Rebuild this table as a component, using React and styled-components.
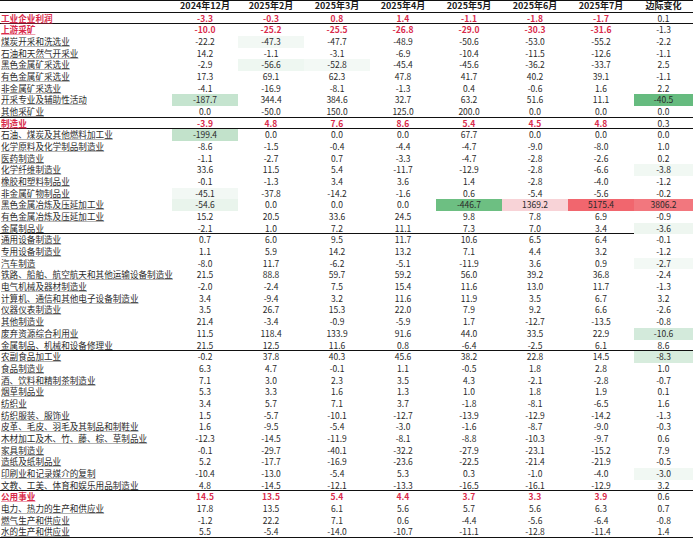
import React from "react";
import styled, { createGlobalStyle } from "styled-components";

const GlobalStyle = createGlobalStyle`
  html, body {
    margin: 0;
    padding: 0;
    background: #ffffff;
  }
  body {
    font-family: "Noto Sans CJK SC", "Noto Sans", sans-serif;
    color: #222222;
  }
`;

const months = [
  "2024年12月",
  "2025年2月",
  "2025年3月",
  "2025年4月",
  "2025年5月",
  "2025年6月",
  "2025年7月",
  "边际变化"
];

// name, values, red (section total), line (thick rule below)
const rows = [
  ["工业企业利润", [-3.3, -0.3, 0.8, 1.4, -1.1, -1.8, -1.7, 0.1], true, true],
  ["上游采矿", [-10.0, -25.2, -25.5, -26.8, -29.0, -30.3, -31.6, -1.3], true],
  ["煤炭开采和洗选业", [-22.2, -47.3, -47.7, -48.9, -50.6, -53.0, -55.2, -2.2]],
  ["石油和天然气开采业", [14.2, -1.1, -3.1, -6.9, -10.4, -11.5, -12.6, -1.1]],
  ["黑色金属矿采选业", [-2.9, -56.6, -52.8, -45.4, -45.6, -36.2, -33.7, 2.5]],
  ["有色金属矿采选业", [17.3, 69.1, 62.3, 47.8, 41.7, 40.2, 39.1, -1.1]],
  ["非金属矿采选业", [-4.1, -16.9, -8.1, -1.3, 0.4, -0.6, 1.6, 2.2]],
  ["开采专业及辅助性活动", [-187.7, 344.4, 384.6, 32.7, 63.2, 51.6, 11.1, -40.5]],
  ["其他采矿业", [0.0, -50.0, 150.0, 125.0, 200.0, 0.0, 0.0, 0.0], false, true],
  ["制造业", [-3.9, 4.8, 7.6, 8.6, 5.4, 4.5, 4.8, 0.3], true, true],
  ["石油、煤炭及其他燃料加工业", [-199.4, 0.0, 0.0, 0.0, 67.7, 0.0, 0.0, 0.0]],
  ["化学原料及化学制品制造业", [-8.6, -1.5, -0.4, -4.4, -4.7, -9.0, -8.0, 1.0]],
  ["医药制造业", [-1.1, -2.7, 0.7, -3.3, -4.7, -2.8, -2.6, 0.2]],
  ["化学纤维制造业", [33.6, 11.5, 5.4, -11.7, -12.9, -2.8, -6.6, -3.8]],
  ["橡胶和塑料制品业", [-0.1, -1.3, 3.4, 3.6, 1.4, -2.8, -4.0, -1.2]],
  ["非金属矿物制品业", [-45.1, -37.8, -14.2, -1.6, 0.6, -5.4, -5.6, -0.2]],
  ["黑色金属冶炼及压延加工业", [-54.6, 0.0, 0.0, 0.0, -446.7, 1369.2, 5175.4, 3806.2]],
  ["有色金属冶炼及压延加工业", [15.2, 20.5, 33.6, 24.5, 9.8, 7.8, 6.9, -0.9]],
  ["金属制品业", [-2.1, 1.0, 7.2, 11.1, 7.3, 7.0, 3.4, -3.6], false, true],
  ["通用设备制造业", [0.7, 6.0, 9.5, 11.7, 10.6, 6.5, 6.4, -0.1]],
  ["专用设备制造业", [1.1, 5.9, 14.2, 13.2, 7.1, 4.4, 3.2, -1.2]],
  ["汽车制造", [-8.0, 11.7, -6.2, -5.1, -11.9, 3.6, 0.9, -2.7]],
  ["铁路、船舶、航空航天和其他运输设备制造业", [21.5, 88.8, 59.7, 59.2, 56.0, 39.2, 36.8, -2.4]],
  ["电气机械及器材制造业", [-2.0, -2.4, 7.5, 15.4, 11.6, 13.0, 11.7, -1.3]],
  ["计算机、通信和其他电子设备制造业", [3.4, -9.4, 3.2, 11.6, 11.9, 3.5, 6.7, 3.2]],
  ["仪器仪表制造业", [3.5, 26.7, 15.3, 22.0, 7.9, 9.2, 6.6, -2.6]],
  ["其他制造业", [21.4, -3.4, -0.9, -5.9, 1.7, -12.7, -13.5, -0.8]],
  ["废弃资源综合利用业", [11.5, 118.4, 133.9, 91.6, 44.0, 33.5, 22.9, -10.6]],
  ["金属制品、机械和设备修理业", [21.5, 12.5, 11.6, 0.8, -6.4, -2.5, 6.1, 8.6], false, true],
  ["农副食品加工业", [-0.2, 37.8, 40.3, 45.6, 38.2, 22.8, 14.5, -8.3]],
  ["食品制造业", [6.3, 4.7, -0.1, 1.1, -0.5, 1.8, 2.8, 1.0]],
  ["酒、饮料和精制茶制造业", [7.1, 3.0, 2.3, 3.5, 4.3, -2.1, -2.8, -0.7]],
  ["烟草制品业", [5.3, 3.3, 1.6, 1.3, 1.0, 1.8, 1.9, 0.1]],
  ["纺织业", [3.4, 5.7, 7.1, 3.7, -1.8, -8.1, -6.5, 1.6]],
  ["纺织服装、服饰业", [1.5, -5.7, -10.1, -12.7, -13.9, -12.9, -14.2, -1.3]],
  ["皮革、毛皮、羽毛及其制品和制鞋业", [1.6, -9.5, -5.4, -3.0, -1.6, -8.7, -9.0, -0.3]],
  ["木材加工及木、竹、藤、棕、草制品业", [-12.3, -14.5, -11.9, -8.1, -8.8, -10.3, -9.7, 0.6]],
  ["家具制造业", [-0.1, -29.7, -40.1, -32.2, -27.9, -23.1, -15.2, 7.9]],
  ["造纸及纸制品业", [5.2, -17.7, -16.9, -23.6, -22.5, -21.4, -21.9, -0.5]],
  ["印刷业和记录媒介的复制", [-10.4, -13.0, -5.4, 5.3, 0.3, -1.0, -4.0, -3.0]],
  ["文教、工美、体育和娱乐用品制造业", [4.8, -14.5, -12.1, -13.3, -16.5, -16.1, -12.9, 3.2], false, true],
  ["公用事业", [14.5, 13.5, 5.4, 4.4, 3.7, 3.3, 3.9, 0.6], true],
  ["电力、热力的生产和供应业", [17.8, 13.5, 6.1, 5.6, 5.7, 5.6, 6.3, 0.7]],
  ["燃气生产和供应业", [-1.2, 22.2, 7.1, 0.6, -4.4, -5.6, -6.4, -0.8]],
  ["水的生产和供应业", [5.5, -5.4, -14.0, -10.7, -11.1, -12.8, -11.4, 1.4], false, true]
];

// conditional-format fills, keyed by row index then column index
const fills = {
  2: { 1: "#f2f8f4" },
  4: { 1: "#eef7f1", 2: "#f3f9f5" },
  7: { 0: "#c5e4cf", 7: "#66bb7f" },
  10: { 0: "#c2e2cb" },
  13: { 7: "#f1f8f3" },
  15: { 0: "#f2f8f4" },
  16: { 0: "#e9f4ec", 4: "#6dbf82", 5: "#f8d3d7", 6: "#f1666e", 7: "#f2777e" },
  18: { 7: "#eef6f0" },
  21: { 7: "#f3f9f5" },
  27: { 7: "#d3eadb" },
  29: { 7: "#d7ecdd" },
  39: { 7: "#f1f8f3" }
};

const RED = "#d92b4b";
const COLS = "172px repeat(7, 66px) 59px";

function App() {
  return (
    <>
      <GlobalStyle />
      <Sheet>
        <HeadRow>
          <span />
          {months.map(m => (
            <HeadCell key={m}>{m}</HeadCell>
          ))}
        </HeadRow>
        {rows.map(([name, values, red, line], i) => (
          <Row key={name} $line={line}>
            <Name $red={red}>{name}</Name>
            {values.map((v, j) => (
              <Cell
                key={j}
                $red={red && j < 7}
                $fill={fills[i] && fills[i][j]}
              >
                {v.toFixed(1)}
              </Cell>
            ))}
          </Row>
        ))}
      </Sheet>
    </>
  );
}

export default App;

const Sheet = styled.div`
  width: 693px;
  font-size: 8.5px;
`;

const HeadRow = styled.div`
  display: grid;
  grid-template-columns: ${COLS};
  height: 12.7px;
  box-sizing: border-box;
  border-top: 1px solid #111;
  border-bottom: 1.5px solid #111;
  align-items: center;
`;

const HeadCell = styled.span`
  text-align: center;
  font-weight: 700;
  font-size: 9px;
  line-height: 10px;
  color: #1a1a1a;
`;

const Row = styled.div`
  display: grid;
  grid-template-columns: ${COLS};
  height: 11.68px;
  box-sizing: border-box;
  border-bottom: ${p => (p.$line ? "1.5px solid #111" : "none")};
`;

const Name = styled.span`
  padding-left: 1px;
  font-size: 8.6px;
  line-height: 11.2px;
  white-space: nowrap;
  color: ${p => (p.$red ? RED : "#2a2a2a")};
  font-weight: ${p => (p.$red ? 700 : 400)};
  text-decoration: underline;
  text-decoration-color: ${p => (p.$red ? "rgba(217,43,75,0.45)" : "rgba(0,0,0,0.3)")};
  text-decoration-thickness: 0.5px;
  text-underline-offset: 1px;
`;

const Cell = styled.span`
  text-align: center;
  line-height: 11.2px;
  background: ${p => p.$fill || "transparent"};
  color: ${p => (p.$red ? RED : "#2a2a2a")};
  font-weight: ${p => (p.$red ? 600 : 400)};
`;
